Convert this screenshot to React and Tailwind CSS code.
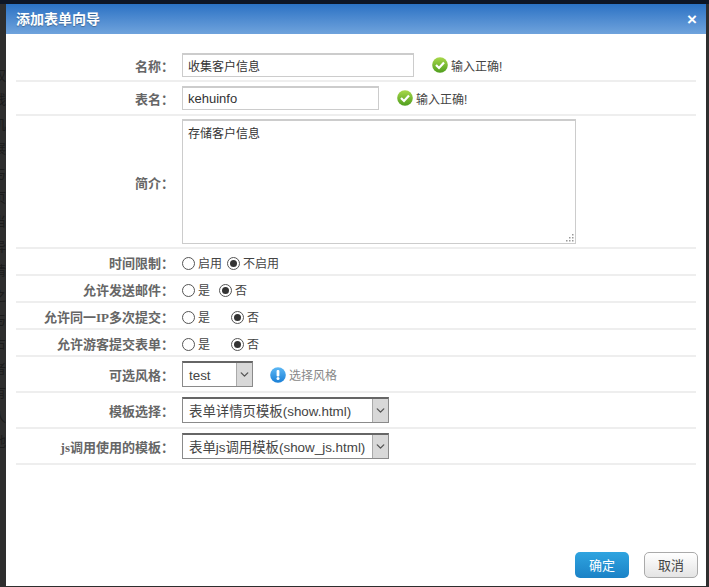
import React from 'react';
import { ChevronDown } from 'lucide-react';

const sideChars = ['权', '线', '叽', '展', '与', '页', '当', '异', '请', '之', '与', '占', '者', '有', '人', '地'];

const CheckIcon = () => (
  <svg width="16" height="16" viewBox="0 0 16 16" className="shrink-0">
    <defs>
      <linearGradient id="okGrad" x1="0" y1="0" x2="0" y2="1">
        <stop offset="0" stopColor="#a8d84a" />
        <stop offset="1" stopColor="#4f9e1e" />
      </linearGradient>
    </defs>
    <circle cx="8" cy="8" r="7.8" fill="url(#okGrad)" />
    <path d="M4 8l3 3 5-5.5" fill="none" stroke="#fff" strokeWidth="2.2" />
  </svg>
);

const OkTip = () => (
  <span className="flex items-center gap-[3px] text-[12px] text-[#444]">
    <CheckIcon />
    <span className="pt-[4px]">输入正确!</span>
  </span>
);

const InfoIcon = () => (
  <svg width="16" height="16" viewBox="0 0 16 16" className="shrink-0">
    <defs>
      <linearGradient id="infoGrad" x1="0" y1="0" x2="0" y2="1">
        <stop offset="0" stopColor="#5db8f5" />
        <stop offset="1" stopColor="#1a7fd6" />
      </linearGradient>
    </defs>
    <circle cx="8" cy="8" r="7.8" fill="url(#infoGrad)" />
    <rect x="6.6" y="3" width="2.8" height="6.4" rx="1" fill="#fff" />
    <circle cx="8" cy="11.6" r="1.5" fill="#fff" />
  </svg>
);

const Radio = ({ checked, label, className = '' }) => (
  <span className={`mt-[4px] flex items-center gap-[3px] ${className}`}>
    <span className="flex h-[13px] w-[13px] items-center justify-center rounded-full border border-[#555] bg-white">
      {checked && <span className="h-[7px] w-[7px] rounded-full bg-[#333]" />}
    </span>
    {label}
  </span>
);

const Select = ({ value, width }) => (
  <div className={`flex h-[26px] items-stretch border border-t-2 border-[#8a8a8a] border-t-[#666] bg-white ${width}`}>
    <span className="flex-1 overflow-hidden whitespace-nowrap pl-[6px] text-[13.4px] leading-[25px] text-[#444]">{value}</span>
    <span className="flex w-[16px] items-center justify-center border-l border-[#aaa] bg-[#d8d8d8]">
      <ChevronDown size={13} strokeWidth={2.5} className="text-[#555]" />
    </span>
  </div>
);

const Row = ({ label, height, children }) => (
  <div className={`flex items-center border-b-2 border-double border-[#eeeeee] ${height}`}>
    <div className="w-[158px] pt-[4px] text-right font-[Liberation_Serif,'Noto_Sans_CJK_SC',serif] text-[13px] font-bold text-[#666]">{label}：</div>
    <div className="ml-[8px] flex flex-1 items-center text-[12px] text-[#444]">{children}</div>
  </div>
);

const App = () => (
  <div className="flex h-[587px] w-[709px] flex-col overflow-hidden bg-[#2e2e2e] font-['Liberation_Sans','Noto_Sans_CJK_SC',sans-serif]">
    <div className="h-[4px] shrink-0 bg-[#0d1626]" />
    <div className="flex flex-1">
      {/* page behind the mask, only a sliver shows */}
      <div className="flex w-[6px] shrink-0 flex-col items-end overflow-hidden pt-[60px] text-[13px] leading-[24.4px] text-[#1c1c1c]">
        {sideChars.map((c, i) => (
          <span key={i} className="shrink-0 whitespace-nowrap">{c}</span>
        ))}
      </div>
      <div className="flex h-[582px] w-[700px] shrink-0 flex-col bg-white">
        <div className="flex h-[30px] items-center justify-between bg-gradient-to-b from-[#2a72c4] to-[#6fa3dc] pl-[10px] pr-[9px]">
          <span className="text-[14px] font-bold text-white [text-shadow:0_1px_1px_rgba(0,0,0,0.3)]">添加表单向导</span>
          <span className="text-[17px] font-bold leading-none text-white">×</span>
        </div>

        <div className="mx-[10px] mt-[15px] flex-1">
          <Row label="名称" height="h-[33px]">
            <div className="h-[24px] w-[232px] border border-[#ccc] border-t-2 pl-[5px] text-[12px] leading-[25px] text-[#333]">收集客户信息</div>
            <span className="ml-[18px]"><OkTip /></span>
          </Row>
          <Row label="表名" height="h-[34px]">
            <div className="h-[24px] w-[197px] border border-[#ccc] border-t-2 pl-[5px] text-[13px] leading-[21px] text-[#333]">kehuinfo</div>
            <span className="ml-[18px]"><OkTip /></span>
          </Row>
          <Row label="简介" height="h-[133px]">
            <div className="relative h-[125px] w-[394px] border border-[#ccc] border-t-2 p-[5px] text-[12px] leading-[16px] text-[#333]">
              存储客户信息
              <svg width="10" height="10" viewBox="0 0 10 10" className="absolute bottom-[1px] right-[1px]">
                <path d="M8 2h1.5v1.5H8zM5 5h1.5v1.5H5zM8 5h1.5v1.5H8zM2 8h1.5v1.5H2zM5 8h1.5v1.5H5zM8 8h1.5v1.5H8z" fill="#999" />
              </svg>
            </div>
          </Row>
          <Row label="时间限制" height="h-[27px]">
            <Radio label="启用" />
            <Radio checked label="不启用" className="ml-[5px]" />
          </Row>
          <Row label="允许发送邮件" height="h-[27px]">
            <Radio label="是" />
            <Radio checked label="否" className="ml-[9px]" />
          </Row>
          <Row label="允许同一IP多次提交" height="h-[27px]">
            <Radio label="是" />
            <Radio checked label="否" className="ml-[21px]" />
          </Row>
          <Row label="允许游客提交表单" height="h-[27px]">
            <Radio label="是" />
            <Radio checked label="否" className="ml-[21px]" />
          </Row>
          <Row label="可选风格" height="h-[36px]">
            <Select value="test" width="w-[71px]" />
            <span className="ml-[17px] mt-[2px] flex items-center gap-[3px] text-[12px] text-[#888]">
              <InfoIcon />
              <span className="pt-[2px]">选择风格</span>
            </span>
          </Row>
          <Row label="模板选择" height="h-[36px]">
            <Select value="表单详情页模板(show.html)" width="w-[207px]" />
          </Row>
          <Row label="js调用使用的模板" height="h-[36px]">
            <Select value="表单js调用模板(show_js.html)" width="w-[207px]" />
          </Row>
        </div>

        <div className="flex justify-end gap-[15px] pb-[8px] pr-[8px]">
          <button className="h-[26px] w-[54px] rounded-[5px] bg-gradient-to-b from-[#2fa4e0] to-[#1b82c6] pt-[1px] text-[13px] text-white">确定</button>
          <button className="h-[26px] w-[54px] rounded-[5px] border border-[#aaa] bg-gradient-to-b from-white to-[#e4e4e4] pt-[1px] text-[13px] text-[#444]">取消</button>
        </div>
      </div>
    </div>
  </div>
);

export default App;
